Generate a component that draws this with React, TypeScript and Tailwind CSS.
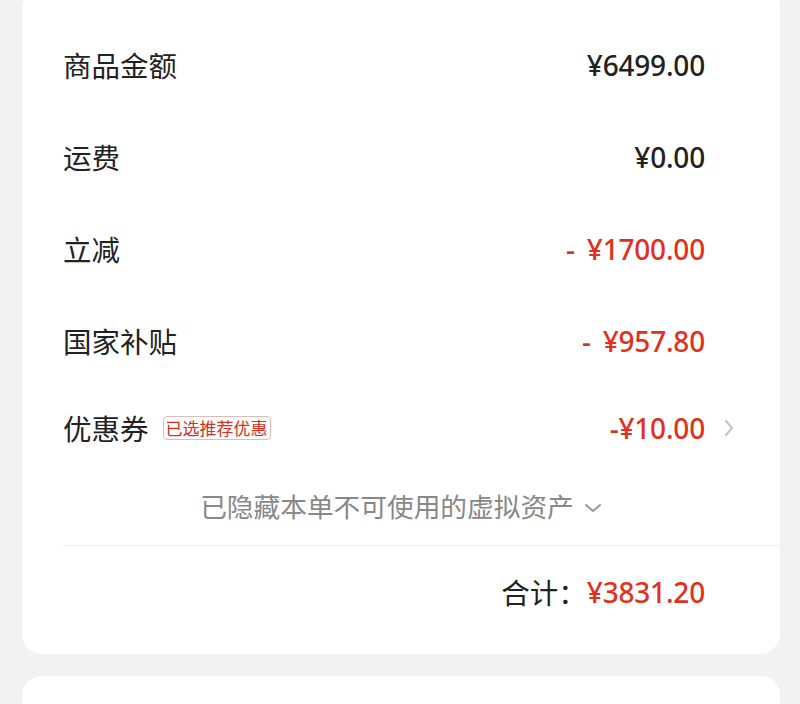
import React from "react";

const cjk = { fontFamily: '"Noto Sans CJK SC", "Noto Sans", sans-serif' };
const num = { fontFamily: '"Noto Sans", "Noto Sans CJK SC", sans-serif' };

function Row({ label, amount, red, minus }: { label: string; amount: string; red?: boolean; minus?: boolean }) {
  return (
    <div className="flex h-[92px] items-center pr-[75px]">
      <div className="flex items-center text-[28.5px] text-[#222]" style={cjk}>
        {label}
      </div>
      <div className="flex-1" />
      <div className={`flex items-center text-[28px] font-medium tracking-[-0.2px] ${red ? "text-[#e2301f]" : "text-[#222]"}`} style={num}>
        {minus && <span className="mr-[12px]">-</span>}
        <span>{amount}</span>
      </div>
    </div>
  );
}

export default function App() {
  return (
    <div className="min-h-[704px] w-[800px] overflow-hidden bg-[#f2f2f2]">
      <div className="ml-[22px] mr-[20px] -mt-3 rounded-[20px] bg-white pl-[41px] pt-[31px] pb-[16px]">
        <Row label="商品金额" amount="¥6499.00" />
        <Row label="运费" amount="¥0.00" />
        <Row label="立减" amount="¥1700.00" red minus />
        <Row label="国家补贴" amount="¥957.80" red minus />
        <div className="relative flex h-[82px] items-center pr-[75px]">
          <div className="flex items-center text-[28.5px] text-[#222]" style={cjk}>
            优惠券
            <span className="ml-[14px] rounded-[4px] border border-[#e7b9b3] px-[2px] text-[17px] leading-[22px] text-[#d9301f]">
              已选推荐优惠
            </span>
          </div>
          <div className="flex-1" />
          <div className="text-[28px] font-medium tracking-[-0.2px] text-[#e2301f]" style={num}>
            -¥10.00
          </div>
          <svg className="absolute right-[46px] top-[32px]" width="10" height="18" viewBox="0 0 10 18">
            <path d="M2 2 L8 9 L2 16" fill="none" stroke="#c4c4c4" strokeWidth="2" strokeLinecap="round" strokeLinejoin="round" />
          </svg>
        </div>
        <div className="flex h-[76px] items-center justify-center pr-[41px] pb-[2px]">
          <span className="text-[26.7px] text-[#888]" style={cjk}>
            已隐藏本单不可使用的虚拟资产
          </span>
          <svg className="ml-[10px] mt-[4px]" width="18" height="10" viewBox="0 0 18 10">
            <path d="M2 2 L9 8 L16 2" fill="none" stroke="#999" strokeWidth="2" strokeLinecap="round" strokeLinejoin="round" />
          </svg>
        </div>
        <div className="h-px bg-[#f0f0f0]" />
        <div className="flex h-[92px] items-center justify-end pr-[75px]">
          <span className="text-[28.5px] text-[#222]" style={cjk}>合计：</span>
          <span className="text-[28px] font-medium tracking-[-0.2px] text-[#e2301f]" style={num}>¥3831.20</span>
        </div>
      </div>
      <div className="ml-[22px] mr-[20px] mt-[22px] h-[60px] rounded-t-[20px] bg-white" />
    </div>
  );
}
